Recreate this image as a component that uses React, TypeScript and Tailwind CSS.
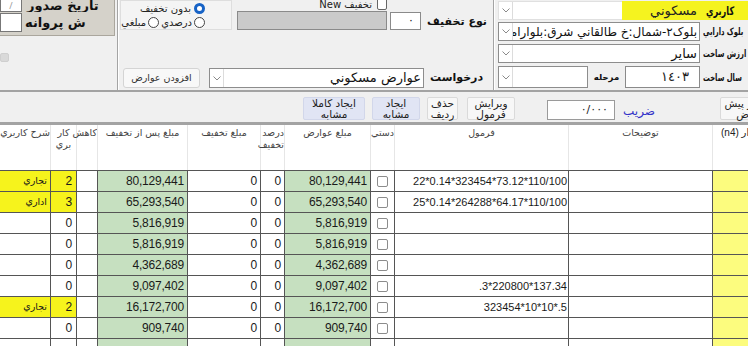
import React from 'react';

const AR = "font-['DejaVu_Sans','Noto_Sans',sans-serif]";
const NUM = "font-['Liberation_Sans','DejaVu_Sans',sans-serif]";
const SQUEEZE = 'inline-block origin-left [transform:scaleX(0.68)]';

const Chevron: React.FC = () => (
    <svg width="8" height="5" viewBox="0 0 8 5">
        <polyline points="0.5,0.5 4,4 7.5,0.5" fill="none" stroke="#8a8a8a" strokeWidth="1" />
    </svg>
);

interface ComboProps {
    w: string;
    text?: string;
    textClass?: string;
}

const Combo: React.FC<ComboProps> = ({ w, text, textClass }) => (
    <div className={`flex h-full shrink-0 bg-white border border-[#8d8d8d] ${w}`}>
        <div className="w-[14px] shrink-0 flex items-center justify-center border-r border-[#dcdcdc] bg-white">
            <Chevron />
        </div>
        <div dir="rtl" className={`flex-1 min-w-0 overflow-hidden whitespace-nowrap flex items-center pr-[2px] text-[#111] ${AR} ${textClass ?? 'text-[12px]'}`}>
            {text}
        </div>
    </div>
);

interface BtnProps {
    w: string;
    l1: string;
    l2: string;
    blue?: boolean;
}

const ToolBtn: React.FC<BtnProps> = ({ w, l1, l2, blue }) => (
    <div dir="rtl" className={`h-[23px] shrink-0 flex flex-col items-center justify-center leading-[11px] text-[10.5px] text-[#222] border rounded-[2px] whitespace-nowrap ${w} ${AR} ${blue ? 'bg-[#e1e5f4] border-[#d2d7ea]' : 'bg-[#f7f7f7] border-[#dadada]'}`}>
        <span>{l1}</span>
        <span>{l2}</span>
    </div>
);

const Radio: React.FC<{ on?: boolean }> = ({ on }) =>
    on ? (
        <span className="w-[11px] h-[11px] rounded-full border-[3px] border-[#1763c6] bg-white shrink-0" />
    ) : (
        <span className="w-[11px] h-[11px] rounded-full border border-[#444] bg-white shrink-0" />
    );

const COLS = ['w-[50px]', 'w-[26px]', 'w-[21px]', 'w-[90px]', 'w-[73px]', 'w-[24px]', 'w-[86px]', 'w-[24px]', 'w-[174px]', 'w-[144px]', 'w-[60px]'];

interface Row {
    d: string;
    k: string;
    hl?: boolean;
    a: string;
    f?: string;
    blank?: boolean;
}

const rows: Row[] = [
    { d: 'تجاري', k: '2', hl: true, a: '80,129,441', f: '22*0.14*323454*73.12*110/100' },
    { d: 'اداري', k: '3', hl: true, a: '65,293,540', f: '25*0.14*264288*64.17*110/100' },
    { d: '', k: '0', a: '5,816,919' },
    { d: '', k: '0', a: '5,816,919' },
    { d: '', k: '0', a: '4,362,689' },
    { d: '', k: '0', a: '9,097,402', f: '.3*220800*137.34' },
    { d: 'تجاري', k: '2', hl: true, a: '16,172,700', f: '323454*10*10*.5' },
    { d: '', k: '0', a: '909,740' },
    { d: '', k: '', a: '', blank: true },
];

const App: React.FC = () => {
    return (
        <div className="w-[748px] h-[346px] overflow-hidden bg-[#f0f0f0] flex flex-col">
            {/* top panel */}
            <div className="h-[90px] flex shrink-0">
                {/* left */}
                <div className="w-[117px] shrink-0 flex flex-col">
                    <div className="w-[115px] h-[36px] bg-[#d5d2ca] border-r border-b border-[#aaa69d] flex flex-col">
                        <div className="h-[12px] flex items-end overflow-hidden">
                            <div className="w-[22px] h-[20px] shrink-0 bg-white border border-[#777] flex items-end justify-center pb-[1px] text-[9px] text-[#999] leading-none">/</div>
                            <span dir="rtl" className={`ml-[5px] text-[13px] font-bold leading-[13px] whitespace-nowrap text-[#111] ${AR}`}>تاريخ صدور</span>
                        </div>
                        <div className="mt-[1px] h-[19px] flex items-center">
                            <div className="w-[22px] h-[19px] shrink-0 bg-white border border-[#777]" />
                            <span dir="rtl" className={`ml-[3px] text-[13px] font-bold whitespace-nowrap text-[#111] ${AR}`}>ش پروانه</span>
                        </div>
                    </div>
                    <div className="mt-[17px] w-[9px] h-[9px] rounded-[2px] bg-[#d9d9d9] border border-[#cfcfcf]" />
                </div>
                <div className="w-px shrink-0 bg-[#a4a4a4]" />
                <div className="w-px shrink-0 bg-white" />
                {/* middle */}
                <div className="w-[374px] shrink-0 flex flex-col">
                    <div className="h-[31px] flex items-start">
                        <div dir="rtl" className={`ml-px w-[112px] h-[30px] shrink-0 border border-[#dedede] bg-[#f4f4f4] pr-[26px] pt-[2px] flex flex-col gap-[3px] text-[10px] text-[#222] ${AR}`}>
                            <div className="flex items-center gap-[3px] leading-[11px]">
                                <Radio on />
                                <span>بدون تخفيف</span>
                            </div>
                            <div className="flex items-center gap-[2px] leading-[11px]">
                                <Radio />
                                <span>درصدي</span>
                                <Radio />
                                <span>مبلغي</span>
                            </div>
                        </div>
                        <div className="ml-[5px] w-[150px] shrink-0 flex flex-col">
                            <div className="h-[10px] overflow-hidden flex items-end justify-end gap-[5px]">
                                <span className={`text-[10px] leading-[11px] text-[#222] ${AR}`}>New تخفيف</span>
                                <div className="w-[10px] h-[13px] bg-white border border-[#666] rounded-[2px] shrink-0" />
                            </div>
                            <div className="mt-px w-[150px] h-[19px] bg-[#cacaca] border border-[#8a8a8a]" />
                        </div>
                        <div className={`ml-[3px] mt-[12px] w-[31px] h-[18px] shrink-0 bg-white border border-[#8a8a8a] flex items-center justify-end pr-[6px] text-[11px] text-[#222] ${AR}`}>٠</div>
                        <span dir="rtl" className={`ml-[6px] mt-[14px] text-[11px] font-bold whitespace-nowrap text-[#111] ${AR}`}>نوع تخفيف</span>
                    </div>
                    <div className="mt-[37px] h-[20px] flex items-center">
                        <div dir="rtl" className={`ml-[4px] w-[77px] h-[20px] shrink-0 bg-[#f8f8f8] border border-[#d4d4d4] rounded-[3px] flex items-center justify-center text-[9.5px] text-[#333] ${AR}`}>افزودن عوارض</div>
                        <div className="ml-[9px] h-[20px] shrink-0">
                            <Combo w="w-[215px]" text="عوارض مسكوني" textClass="text-[13px]" />
                        </div>
                        <span dir="rtl" className={`ml-[6px] text-[11px] font-semibold whitespace-nowrap text-[#111] ${AR}`}>درخواست</span>
                    </div>
                </div>
                <div className="w-px shrink-0 bg-[#a4a4a4]" />
                <div className="w-px shrink-0 bg-white" />
                {/* right */}
                <div className="flex-1 min-w-0 flex flex-col pl-[3px] pt-px">
                    <div className="h-[19px] flex">
                        <div className="w-[124px] shrink-0 h-full bg-white flex border-l border-t border-b border-[#e0e0e0]">
                            <div className="w-[14px] flex items-center justify-center border-r border-[#dcdcdc]">
                                <Chevron />
                            </div>
                        </div>
                        <div className="flex-1 h-full bg-[#f5f31f] flex items-center">
                            <span dir="rtl" className={`w-[78px] shrink-0 text-right pr-[3px] text-[13px] text-[#222] ${AR}`}>مسكوني</span>
                            <span dir="rtl" className={`ml-[6px] text-[12px] font-bold whitespace-nowrap text-[#111] ${AR} ${SQUEEZE}`}>كاربري</span>
                        </div>
                    </div>
                    <div className="mt-[2px] h-[19px] flex items-center">
                        <Combo w="w-[202px]" text="بلوک۲-شمال:خ طالقاني شرق:بلوارام" textClass="text-[12px]" />
                        <span dir="rtl" className={`ml-[3px] text-[10px] font-bold whitespace-nowrap text-[#111] ${AR} ${SQUEEZE}`}>بلوک دارايي</span>
                    </div>
                    <div className="mt-[3px] h-[19px] flex items-center">
                        <Combo w="w-[202px]" text="ساير" textClass="text-[13px]" />
                        <span dir="rtl" className={`ml-[3px] text-[10px] font-bold whitespace-nowrap text-[#111] ${AR} ${SQUEEZE}`}>ارزش ساخت</span>
                    </div>
                    <div className="mt-[3px] h-[22px] flex items-center">
                        <div className="h-full shrink-0">
                            <Combo w="w-[90px]" />
                        </div>
                        <span dir="rtl" className={`w-[37px] shrink-0 text-center text-[8.5px] font-bold text-[#111] ${AR}`}>مرحله</span>
                        <div className={`w-[75px] shrink-0 h-full bg-white border border-[#8a8a8a] flex items-center justify-end pr-[10px] text-[13px] text-[#222] ${AR}`}>١٤٠٣</div>
                        <span dir="rtl" className={`ml-[3px] text-[10px] font-bold whitespace-nowrap text-[#111] ${AR} ${SQUEEZE}`}>سال ساخت</span>
                    </div>
                </div>
            </div>

            {/* toolbar */}
            <div className="h-[35px] shrink-0 overflow-hidden border-t-2 border-b-[3px] border-[#a3a3a3] flex items-start">
                <div className="ml-[303px] mt-[5px] shrink-0">
                    <ToolBtn w="w-[62px]" l1="ايجاد کاملا" l2="مشابه" blue />
                </div>
                <div className="ml-[7px] mt-[5px] shrink-0">
                    <ToolBtn w="w-[48px]" l1="ايجاد" l2="مشابه" blue />
                </div>
                <div className="ml-[7px] mt-[5px] shrink-0">
                    <ToolBtn w="w-[31px]" l1="حذف" l2="رديف" />
                </div>
                <div className="ml-[9px] mt-[5px] shrink-0">
                    <ToolBtn w="w-[48px]" l1="ويرايش" l2="فرمول" />
                </div>
                <div className={`ml-[32px] mt-[8px] w-[68px] h-[20px] shrink-0 bg-white border border-[#9a9a9a] flex items-center justify-end pr-[6px] text-[11px] text-[#222] ${AR}`}>٠/٠٠٠</div>
                <span dir="rtl" className={`ml-[15px] mt-[10px] w-[25px] shrink-0 text-[12px] whitespace-nowrap text-[#3434c8] ${AR}`}>ضريب</span>
                <div className="ml-[65px] mt-[5px] shrink-0">
                    <ToolBtn w="w-[56px]" l1="مقدار پيش" l2="فرض" />
                </div>
            </div>

            {/* table */}
            <div className={`flex-1 bg-white flex flex-col ${NUM}`}>
                <div dir="ltr" className={`h-[45px] shrink-0 flex text-[9.5px] leading-[12px] text-[#444] ${AR}`}>
                    <div dir="rtl" className={`${COLS[0]} shrink-0 pt-[2px] text-center`}>شرح کاربري</div>
                    <div dir="rtl" className={`${COLS[1]} shrink-0 pt-[2px] text-center border-l border-[#e6e6e6]`}>كار<br />بري</div>
                    <div dir="rtl" className={`${COLS[2]} shrink-0 pt-[2px] text-center border-l border-[#e6e6e6]`}>كاهش</div>
                    <div dir="rtl" className={`${COLS[3]} shrink-0 pt-[2px] text-center border-l border-[#e6e6e6]`}>مبلغ پس از تخفيف</div>
                    <div dir="rtl" className={`${COLS[4]} shrink-0 pt-[2px] text-center border-l border-[#e6e6e6]`}>مبلغ تخفيف</div>
                    <div dir="rtl" className={`${COLS[5]} shrink-0 pt-[2px] text-right border-l border-[#e6e6e6]`}>درصد<br />تخفيف</div>
                    <div dir="rtl" className={`${COLS[6]} shrink-0 pt-[2px] text-center border-l border-[#e6e6e6]`}>مبلغ عوارض</div>
                    <div dir="rtl" className={`${COLS[7]} shrink-0 pt-[2px] text-center border-l border-[#e6e6e6]`}>دستي</div>
                    <div dir="rtl" className={`${COLS[8]} shrink-0 pt-[2px] text-center border-l border-[#e6e6e6]`}>فرمول</div>
                    <div dir="rtl" className={`${COLS[9]} shrink-0 pt-[2px] text-center border-l border-[#e6e6e6]`}>توضيحات</div>
                    <div className={`${COLS[10]} shrink-0 pt-[2px] pl-[8px] text-left whitespace-nowrap text-[10px] text-[#222] border-l border-[#e6e6e6]`}>
                        <span className={NUM}>(n4) </span>
                        <span>مقدار</span>
                    </div>
                </div>
                <div className="border-t border-[#555]">
                    {rows.map((r, i) => (
                        <div key={i} className="h-[21px] flex border-b border-[#555] text-[12px] text-[#1a1a1a] tracking-[-0.2px]">
                            <div dir="rtl" className={`${COLS[0]} shrink-0 flex items-center pr-[3px] text-[9.5px] ${AR} ${r.hl ? 'bg-[#f6f31c]' : ''}`}>{r.d}</div>
                            <div className={`${COLS[1]} shrink-0 flex items-center justify-end pr-[4px] border-l border-[#555] ${r.hl ? 'bg-[#f6f31c]' : ''}`}>{r.k}</div>
                            <div className={`${COLS[2]} shrink-0 border-l border-[#555]`} />
                            <div className={`${COLS[3]} shrink-0 flex items-center justify-end pr-[3px] border-l border-[#555] bg-[#c6e0c0]`}>{r.a}</div>
                            <div className={`${COLS[4]} shrink-0 flex items-center justify-end pr-[3px] border-l border-[#555]`}>{r.blank ? '' : '0'}</div>
                            <div className={`${COLS[5]} shrink-0 flex items-center justify-end pr-[3px] border-l border-[#555]`}>{r.blank ? '' : '0'}</div>
                            <div className={`${COLS[6]} shrink-0 flex items-center justify-end pr-[3px] border-l border-[#555] bg-[#c6e0c0]`}>{r.a}</div>
                            <div className={`${COLS[7]} shrink-0 flex items-center justify-center border-l border-[#555]`}>
                                {!r.blank && <div className="w-[11px] h-[11px] rounded-[2px] border border-[#8c8c8c] bg-white" />}
                            </div>
                            <div className={`${COLS[8]} shrink-0 flex items-center justify-end pr-px text-[11px] tracking-normal border-l border-[#555]`}>{r.f}</div>
                            <div className={`${COLS[9]} shrink-0 border-l border-[#555]`} />
                            <div className={`${COLS[10]} shrink-0 border-l border-[#555] bg-[#fcfc7e]`} />
                        </div>
                    ))}
                </div>
            </div>
        </div>
    );
};

export default App;
